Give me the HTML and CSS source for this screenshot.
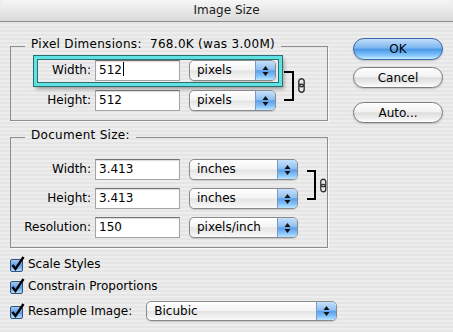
FILE: index.html
```html
<!DOCTYPE html>
<html lang="en">
<head>
    <meta charset="UTF-8">
    <title>Image Size</title>
    <link rel="stylesheet" href="styles.css">
</head>
<body>

<div class="dialog">
    <div class="titlebar">Image Size</div>

    <div class="dialog-body">
        <div class="main">

            <fieldset class="group">
                <legend>Pixel Dimensions:&nbsp; 768.0K (was 3.00M)</legend>
                <div class="linked linked-pixels">
                    <div class="rows">
                        <div class="row row-focus">
                            <label>Width:</label>
                            <div class="field">512<span class="caret"></span></div>
                            <div class="popup popup-short">
                                <span class="popup-label">pixels</span>
                                <span class="arrows"><svg width="7" height="12" viewBox="0 0 7 12"><path d="M3.5 1 L6.5 5 L0.5 5 Z M3.5 11 L6.5 7 L0.5 7 Z" fill="#111"/></svg></span>
                            </div>
                        </div>
                        <div class="row row-plain">
                            <label>Height:</label>
                            <div class="field">512</div>
                            <div class="popup popup-short">
                                <span class="popup-label">pixels</span>
                                <span class="arrows"><svg width="7" height="12" viewBox="0 0 7 12"><path d="M3.5 1 L6.5 5 L0.5 5 Z M3.5 11 L6.5 7 L0.5 7 Z" fill="#111"/></svg></span>
                            </div>
                        </div>
                    </div>
                    <div class="bracket"></div>
                    <svg class="chain" width="7" height="15" viewBox="0 0 7 15">
                        <rect x="0.8" y="0.8" width="5.4" height="8" rx="2.7" fill="none" stroke="#333" stroke-width="1.4"/>
                        <rect x="0.8" y="6.2" width="5.4" height="8" rx="2.7" fill="none" stroke="#333" stroke-width="1.4"/>
                    </svg>
                </div>
            </fieldset>

            <fieldset class="group group-doc">
                <legend>Document Size:</legend>
                <div class="linked linked-doc">
                    <div class="rows">
                        <div class="row">
                            <label>Width:</label>
                            <div class="field">3.413</div>
                            <div class="popup popup-long">
                                <span class="popup-label">inches</span>
                                <span class="arrows"><svg width="7" height="12" viewBox="0 0 7 12"><path d="M3.5 1 L6.5 5 L0.5 5 Z M3.5 11 L6.5 7 L0.5 7 Z" fill="#111"/></svg></span>
                            </div>
                        </div>
                        <div class="row">
                            <label>Height:</label>
                            <div class="field">3.413</div>
                            <div class="popup popup-long">
                                <span class="popup-label">inches</span>
                                <span class="arrows"><svg width="7" height="12" viewBox="0 0 7 12"><path d="M3.5 1 L6.5 5 L0.5 5 Z M3.5 11 L6.5 7 L0.5 7 Z" fill="#111"/></svg></span>
                            </div>
                        </div>
                        <div class="row row-last">
                            <label>Resolution:</label>
                            <div class="field">150</div>
                            <div class="popup popup-long">
                                <span class="popup-label">pixels/inch</span>
                                <span class="arrows"><svg width="7" height="12" viewBox="0 0 7 12"><path d="M3.5 1 L6.5 5 L0.5 5 Z M3.5 11 L6.5 7 L0.5 7 Z" fill="#111"/></svg></span>
                            </div>
                        </div>
                    </div>
                    <div class="bracket"></div>
                    <svg class="chain" width="7" height="15" viewBox="0 0 7 15">
                        <rect x="0.8" y="0.8" width="5.4" height="8" rx="2.7" fill="none" stroke="#333" stroke-width="1.4"/>
                        <rect x="0.8" y="6.2" width="5.4" height="8" rx="2.7" fill="none" stroke="#333" stroke-width="1.4"/>
                    </svg>
                </div>
            </fieldset>

            <div class="checks">
                <div class="check">
                    <svg class="checkbox" width="16" height="16" viewBox="0 0 16 16">
                        <defs>
                            <linearGradient id="cb" x1="0" y1="0" x2="0" y2="1">
                                <stop offset="0" stop-color="#a9cdf4"/>
                                <stop offset="0.5" stop-color="#5c9de6"/>
                                <stop offset="1" stop-color="#b9e2ff"/>
                            </linearGradient>
                        </defs>
                        <rect x="1.5" y="3.5" width="12" height="12" rx="1.5" fill="url(#cb)" stroke="#33507d"/>
                        <path d="M3.5 9 L6.5 13 L14.5 1" fill="none" stroke="#000" stroke-width="2.4"/>
                    </svg>
                    <span>Scale Styles</span>
                </div>
                <div class="check">
                    <svg class="checkbox" width="16" height="16" viewBox="0 0 16 16">
                        <rect x="1.5" y="3.5" width="12" height="12" rx="1.5" fill="url(#cb)" stroke="#33507d"/>
                        <path d="M3.5 9 L6.5 13 L14.5 1" fill="none" stroke="#000" stroke-width="2.4"/>
                    </svg>
                    <span>Constrain Proportions</span>
                </div>
                <div class="check check-resample">
                    <svg class="checkbox" width="16" height="16" viewBox="0 0 16 16">
                        <rect x="1.5" y="3.5" width="12" height="12" rx="1.5" fill="url(#cb)" stroke="#33507d"/>
                        <path d="M3.5 9 L6.5 13 L14.5 1" fill="none" stroke="#000" stroke-width="2.4"/>
                    </svg>
                    <span>Resample Image:</span>
                    <div class="popup popup-resample">
                        <span class="popup-label">Bicubic</span>
                        <span class="arrows"><svg width="7" height="12" viewBox="0 0 7 12"><path d="M3.5 1 L6.5 5 L0.5 5 Z M3.5 11 L6.5 7 L0.5 7 Z" fill="#111"/></svg></span>
                    </div>
                </div>
            </div>

        </div>

        <div class="buttons">
            <button class="btn btn-default">OK</button>
            <button class="btn btn-cancel">Cancel</button>
            <button class="btn btn-auto">Auto...</button>
        </div>
    </div>
</div>

</body>
</html>
```

FILE: styles.css
```css
* {
    box-sizing: border-box;
}
body {
    margin: 0;
    font-family: "DejaVu Sans", sans-serif;
    font-size: 12px;
    color: #000;
}
.dialog {
    width: 453px;
    height: 332px;
    overflow: hidden;
    background: repeating-linear-gradient(to bottom, #ededed 0 2px, #e5e5e5 2px 4px);
}
.titlebar {
    height: 22px;
    line-height: 21px;
    text-align: center;
    color: #1a1a1a;
    background: linear-gradient(#f6f6f6, #dadada);
    border-bottom: 1px solid #8f8f8f;
    border-radius: 5px 5px 0 0;
}
.dialog-body {
    display: flex;
    padding-left: 10px;
}
.main {
    flex: 0 0 318px;
    width: 318px;
}

/* group boxes */
.group {
    margin: 15px 0 0;
    padding: 0;
    min-width: 0;
    border: 1px solid #8d8d8d;
    box-shadow: 1px 1px 0 rgba(255,255,255,0.7);
}
.group-doc {
    margin-top: 7px;
}
.group legend {
    margin-left: 14px;
    padding: 0 6px 4px;
    line-height: 14px;
    letter-spacing: 0.3px;
}
.linked {
    display: flex;
    align-items: flex-start;
    padding-bottom: 9px;
}
.linked-pixels {
    padding-left: 23px;
}
.linked-pixels .rows {
    margin-top: 1px;
}
.linked-doc .rows {
    margin-top: 13px;
}

/* rows */
.row {
    display: flex;
    align-items: center;
    height: 21px;
}
.row label {
    width: 80px;
    margin-right: 4px;
    text-align: right;
    line-height: 21px;
}
.linked-pixels .row label {
    width: 54px;
}
.linked-doc .row + .row {
    margin-top: 8px;
}
.linked-doc .row-last {
    margin-top: 9px;
}
.row-focus {
    height: auto;
    border: 3px solid #5ee2e2;
    padding: 1px 3px 2px 0;
    box-shadow: 0 0 0 1px #2b7070, inset 0 0 0 1px #2b7070, 2px 3px 4px rgba(0,0,0,0.35);
}
.row-plain {
    margin-top: 4px;
    padding-left: 3px;
}
.field {
    width: 85px;
    height: 21px;
    padding-left: 3px;
    line-height: 19px;
    background: #fff;
    border: 1px solid #a4a4a4;
    border-top-color: #727272;
    box-shadow: inset 0 1px 1px rgba(0,0,0,0.15);
}
.caret {
    display: inline-block;
    width: 1px;
    height: 14px;
    margin-left: 1px;
    background: #000;
    vertical-align: -2px;
}

/* popup menus */
.popup {
    display: flex;
    flex-shrink: 0;
    height: 21px;
    margin-left: 9px;
    overflow: hidden;
    border: 1px solid #8a8a8a;
    border-radius: 5px;
    background: linear-gradient(#ffffff 0%, #f3f3f3 48%, #e4e4e4 52%, #f0f0f0 80%, #fafafa 100%);
    box-shadow: 0 1px 1px rgba(0,0,0,0.15);
}
.popup-short {
    width: 87px;
}
.popup-long {
    width: 109px;
}
.popup-resample {
    width: 191px;
    height: 20px;
    margin-left: 14px;
}
.popup-label {
    flex: 1;
    padding-left: 7px;
    line-height: 19px;
}
.popup-resample .popup-label {
    line-height: 18px;
}
.arrows {
    width: 20px;
    display: flex;
    align-items: center;
    justify-content: center;
    border-left: 1px solid #7c98c4;
    background: linear-gradient(#c6e1fb 0%, #8fc0f1 45%, #5d9fe9 52%, #85c3f9 80%, #bde6ff 100%);
}

/* link brackets */
.bracket {
    width: 10px;
    height: 30px;
    border: 2px solid #000;
    border-left: none;
}
.linked-pixels .bracket {
    margin: 16px 0 0 2px;
}
.linked-doc .bracket {
    margin: 24px 0 0 9px;
}
.chain {
    margin-left: 4px;
}
.linked-pixels .chain {
    margin-top: 23px;
}
.linked-doc .chain {
    margin-top: 32px;
}

/* checkboxes */
.checks {
    margin-top: 8px;
}
.check {
    display: flex;
    align-items: center;
    height: 16px;
    white-space: nowrap;
}
.check + .check {
    margin-top: 6px;
}
.check-resample {
    height: 20px;
}
.check.check-resample {
    margin-top: 7px;
}
.checkbox {
    flex-shrink: 0;
    margin-left: -1px;
    margin-right: 3px;
}

/* buttons */
.buttons {
    display: flex;
    flex-direction: column;
    width: 90px;
    margin: 16px 0 0 25px;
}
.btn {
    height: 21px;
    padding: 0;
    font-family: "DejaVu Sans", sans-serif;
    font-size: 12px;
    color: #000;
    border: 1px solid #7b7b7b;
    border-radius: 11px;
    background: linear-gradient(#fefefe 0%, #f2f2f2 45%, #dedede 52%, #ececec 78%, #ffffff 100%);
    box-shadow: 0 1px 2px rgba(0,0,0,0.2);
}
.btn-default {
    height: 22px;
    border-color: #3a67a6;
    background: linear-gradient(#c3def8 0%, #7ab6f0 45%, #4c98e6 52%, #7ec2fb 80%, #c6eeff 100%);
}
.btn-cancel {
    margin-top: 7px;
}
.btn-auto {
    margin-top: 14px;
}
```
